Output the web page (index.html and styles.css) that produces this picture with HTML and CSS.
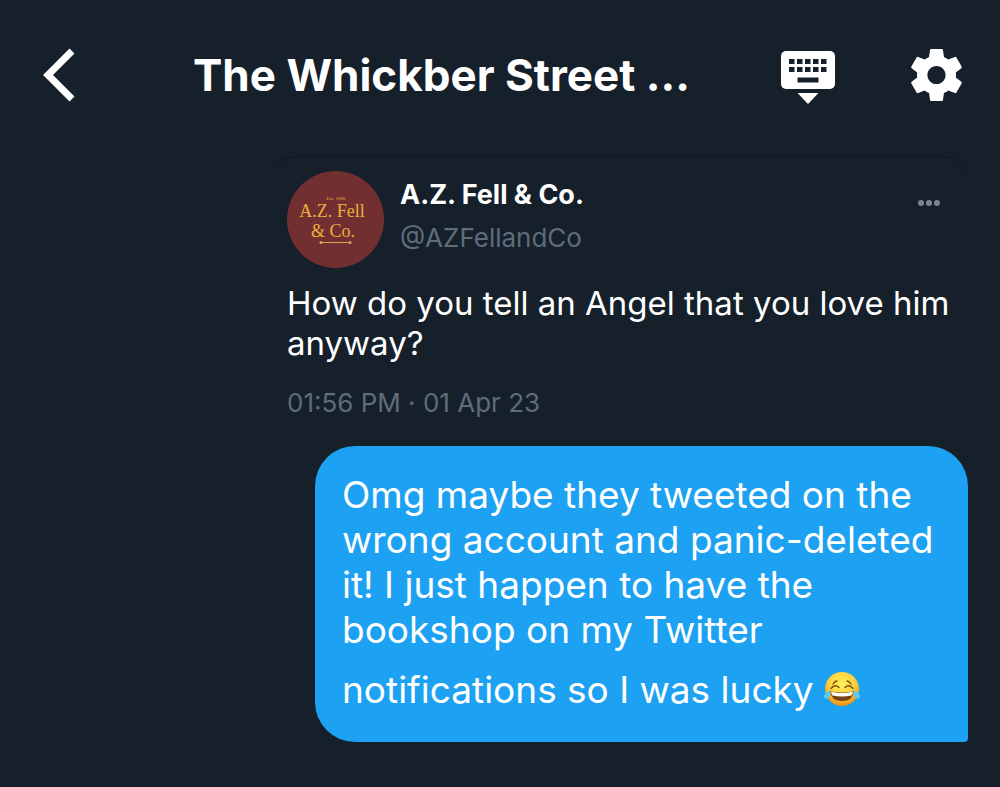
FILE: index.html
```html
<!DOCTYPE html>
<html lang="en">
<head>
	<meta charset="UTF-8">
	<meta name="viewport" content="width=device-width, initial-scale=1">
	<title>The Whickber Street ...</title>
	<link rel="stylesheet" href="styles.css">
</head>
<body>
	<header class="top-bar">
		<button class="icon-btn" type="button" aria-label="Back">
			<svg class="icon-back" viewBox="0 0 32 54"><path d="M29 3 5 27l24 24" fill="none" stroke="#fff" stroke-width="7"/></svg>
		</button>
		<h1 class="title">The Whickber Street ...</h1>
		<button class="icon-btn" type="button" aria-label="Hide keyboard">
			<svg class="icon-keyboard" viewBox="0 0 54 58">
				<rect width="54" height="38" y="5" rx="5" fill="#fff"/>
				<path d="M8 15.500h40M8 23.500h40" stroke="#16202a" stroke-width="5" stroke-dasharray="5.500 2.500"/>
				<path d="M16.500 34h21" stroke="#16202a" stroke-width="5"/>
				<path d="M16.500 47h21L27 58z" fill="#fff"/>
			</svg>
		</button>
		<button class="icon-btn" type="button" aria-label="Settings">
			<svg class="icon-gear" viewBox="2.200 2 19.600 20"><path fill="#fff" d="M19.430 12.980c.04-.32.07-.64.07-.98s-.03-.66-.07-.98l2.110-1.650c.19-.15.24-.42.12-.64l-2-3.460c-.12-.22-.39-.3-.61-.22l-2.490 1c-.52-.4-1.080-.73-1.690-.98l-.38-2.650C14.460 2.180 14.250 2 14 2h-4c-.25 0-.46.18-.49.42l-.38 2.650c-.61.25-1.170.59-1.690.98l-2.490-1c-.23-.09-.49 0-.61.22l-2 3.460c-.13.22-.07.49.12.64l2.110 1.650c-.04.32-.07.65-.07.98s.03.66.07.98l-2.110 1.650c-.19.15-.24.42-.12.64l2 3.460c.12.22.39.3.61.22l2.490-1c.52.4 1.080.73 1.690.98l.38 2.650c.03.24.24.42.49.42h4c.25 0 .46-.18.49-.42l.38-2.650c.61-.25 1.170-.59 1.690-.98l2.490 1c.23.09.49 0 .61-.22l2-3.460c.12-.22.07-.49-.12-.64l-2.110-1.650zM12 15.500c-1.930 0-3.500-1.570-3.500-3.500s1.570-3.500 3.500-3.500 3.500 1.570 3.500 3.500-1.570 3.500-3.500 3.500z"/></svg>
		</button>
	</header>

	<main class="chat">
		<article class="tweet">
			<div class="tweet-head">
				<svg class="avatar" viewBox="0 0 97 97" role="img" aria-label="A.Z. Fell &amp; Co.">
					<circle cx="48.500" cy="48.500" r="48.500" fill="#722f32"/>
					<g class="avatar-text" fill="#eaae3c" text-anchor="middle">
						<text x="49" y="29" font-size="5">Est. 1800</text>
						<text x="45" y="46" font-size="18">A.Z. Fell</text>
						<text x="46" y="66" font-size="18">&amp; Co.</text>
					</g>
					<path d="M34 71.500h29" stroke="#e0a35a"/>
					<circle cx="34" cy="71.500" r="1.500" fill="#e0a35a"/>
					<circle cx="63" cy="71.500" r="1.500" fill="#e0a35a"/>
				</svg>
				<div class="author">
					<strong class="name">A.Z. Fell &amp; Co.</strong>
					<a class="handle" href="#">@AZFellandCo</a>
				</div>
				<button class="more" type="button" aria-label="More">
					<svg class="icon-more" viewBox="0 0 24 8"><g fill="#798491"><circle cx="4" cy="4" r="3"/><circle cx="12" cy="4" r="3"/><circle cx="20" cy="4" r="3"/></g></svg>
				</button>
			</div>
			<p class="tweet-text">How do you tell an Angel that you love him anyway?</p>
			<time class="tweet-time" datetime="2023-04-01T13:56">01:56 PM · 01 Apr 23</time>
		</article>

		<p class="bubble">Omg maybe they tweeted on the wrong account and panic-deleted it! I just happen to have the bookshop on my Twitter notifications so I was lucky <svg class="emoji" viewBox="0 0 36 36" role="img" aria-label="Face with tears of joy">
			<defs>
				<radialGradient id="face" cx=".5" cy=".35" r=".65">
					<stop offset="0" stop-color="#fff05c"/>
					<stop offset=".6" stop-color="#fdd03b"/>
					<stop offset="1" stop-color="#ed8d13"/>
				</radialGradient>
			</defs>
			<circle cx="18" cy="18" r="17" fill="url(#face)"/>
			<path d="M7 17.500q4-5 8-1M21 16.500q4-4 8 1M9 13q2-3 4-3M23 10q2 0 4 3" fill="none" stroke="#794611" stroke-width="1.300" stroke-linecap="round"/>
			<path d="M6 20q12 3 24 0-1 10-12 10T6 20z" fill="#7b4210"/>
			<path d="M7 20.500q11 3 22 0-.5 3-1.500 4-9.500 2-19 0-1-1-1.500-4z" fill="#fff"/>
			<path d="M6 19c1 4 0 8-3 9-3 0-4-3-2-5 1-2 3-2 5-4zM30 19c-1 4 0 8 3 9 3 0 4-3 2-5-1-2-3-2-5-4z" fill="#5cc9ef"/>
		</svg></p>
	</main>
</body>
</html>
```

FILE: styles.css
```css
*{
	box-sizing: border-box;
}
body{
	margin: 0;
	background-color: #16202a;
	color: #fff;
	font-family: Inter, "Liberation Sans", sans-serif;
}
button{
	padding: 0;
	border: 0;
	background: none;
	cursor: pointer;
}
svg{
	display: block;
}

.top-bar{
	display: flex;
	align-items: center;
	height: 150px;
	padding: 0 38px 0 43px;
}
.icon-btn{
	flex: none;
}
.icon-back{
	width: 32px;
	height: 54px;
}
.icon-keyboard{
	width: 54px;
	height: 58px;
	margin-right: 76px;
}
.icon-gear{
	width: 51px;
	height: 52px;
}
.title{
	flex: 1;
	margin: 0;
	padding-left: 118px;
	font-size: 44px;
	line-height: 52px;
	font-weight: 700;
	white-space: nowrap;
}

.chat{
	display: flex;
	flex-direction: column;
	gap: 16px;
	padding: 6px 32px 44px;
}
.tweet{
	margin-left: 239px;
	padding: 15px 8px 7px 16px;
	border-radius: 24px;
	box-shadow: inset 0 2px 1px -1px rgba(12, 20, 28, .6);
}
.tweet-head{
	display: flex;
	gap: 16px;
}
.avatar{
	flex: none;
	width: 97px;
	height: 97px;
}
.avatar-text{
	font-family: "Liberation Serif", serif;
}
.author{
	flex: 1;
	padding-top: 2px;
	line-height: 43px;
}
.name, .handle{
	display: block;
}
.name{
	font-size: 27px;
}
.handle{
	color: #5f6c7b;
	font-size: 26px;
	text-decoration: none;
}
.more{
	align-self: flex-start;
	padding: 28px 19px 0 0;
}
.icon-more{
	width: 24px;
	height: 8px;
}
.tweet-text{
	margin: 15px 0 20px;
	font-size: 33px;
	line-height: 40px;
}
.tweet-time{
	display: block;
	color: #5f6c7b;
	font-size: 26px;
	line-height: 40px;
}

.bubble{
	margin: 0 0 0 283px;
	padding: 26px 27px 30px;
	border-radius: 40px 40px 4px 40px;
	background-color: #1da1f2;
	font-size: 37px;
	line-height: 45px;
}
.emoji{
	display: inline-block;
	width: 36px;
	height: 36px;
	margin-top: 19px;
	vertical-align: -4px;
}
```
